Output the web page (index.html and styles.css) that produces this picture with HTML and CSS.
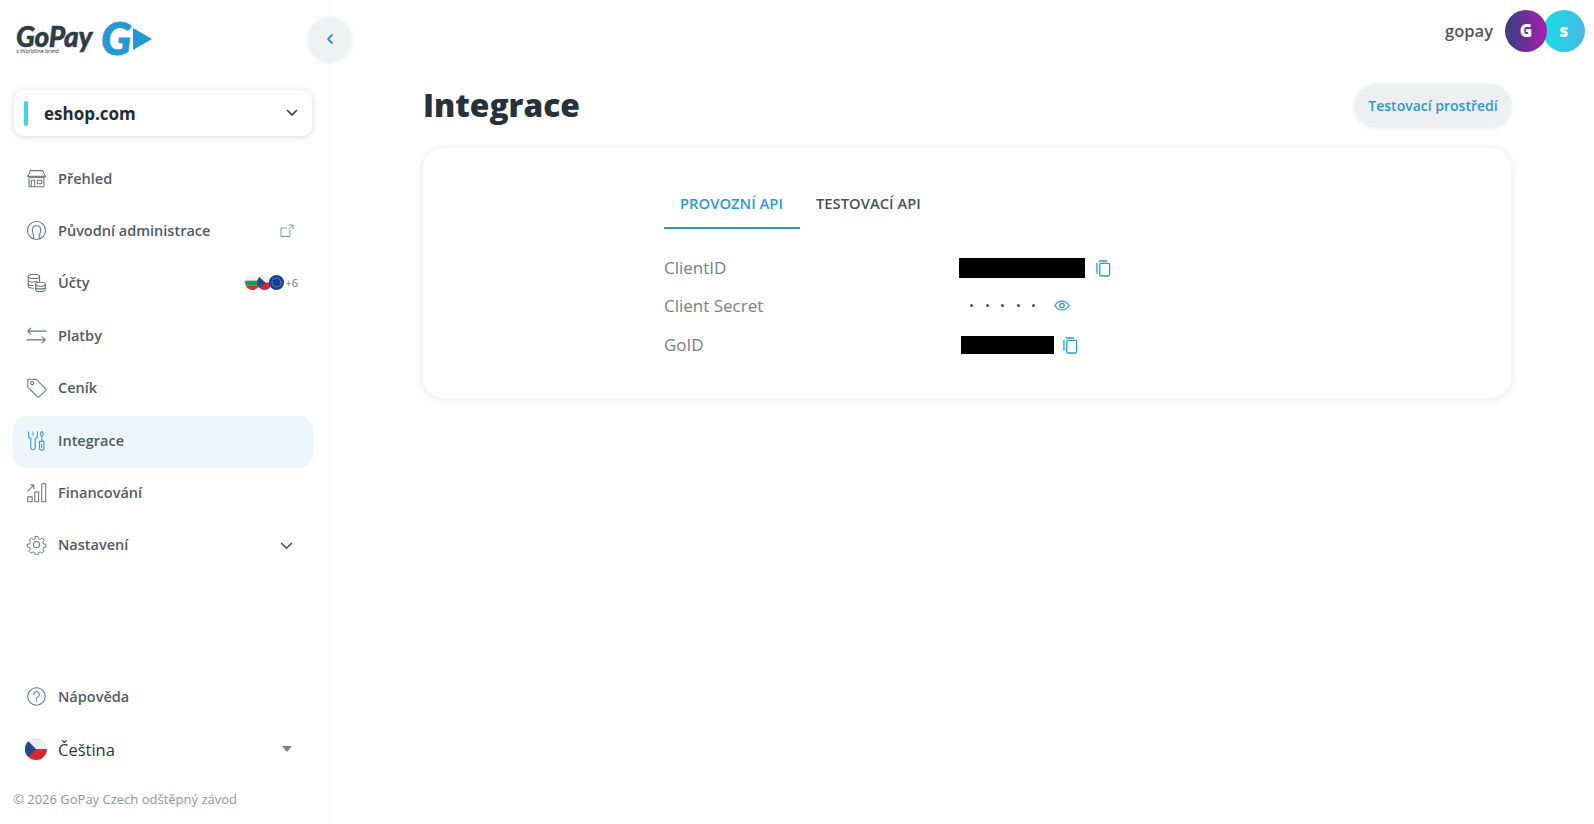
FILE: index.html
```html
<!DOCTYPE html>
<html lang="cs">
<head>
<meta charset="utf-8">
<title>Integrace</title>
<link rel="stylesheet" href="styles.css">
</head>
<body>
<div class="app">
  <aside class="sidebar">
    <div class="logo">
      <div class="logo-word"><span class="logo-name">GoPay</span><span class="logo-sub">a Worldline brand</span></div>
      <span class="logo-g">G</span>
      <svg class="logo-arrow" viewBox="0 0 19 22"><path d="M0 0 19 11 0 22z" fill="#1f9ad6"/></svg>
    </div>
    <button class="collapse" type="button" aria-label="Sbalit">
      <svg viewBox="0 0 12 12" width="12" height="12"><path d="M8 2 4 6l4 4" fill="none" stroke="#2a93c9" stroke-width="1.8" stroke-linecap="round" stroke-linejoin="round"/></svg>
    </button>
    <div class="shop">
      <span class="shop-bar"></span>
      <span class="shop-name">eshop.com</span>
      <svg class="shop-caret" viewBox="0 0 12 8" width="12" height="8"><path d="M1.500 1.500 6 6l4.500-4.500" fill="none" stroke="#333b42" stroke-width="1.600" stroke-linecap="round" stroke-linejoin="round"/></svg>
    </div>
    <nav class="nav">
      <a class="item">
        <svg class="ico" viewBox="0 0 24 24"><path d="M5 3h14l3 6.500a2 2 0 0 1-3.700.6 2 2 0 0 1-3.500 0 2 2 0 0 1-3.600 0 2 2 0 0 1-3.600 0 2 2 0 0 1-3.500 0A2 2 0 0 1 2 9.500zM2 9.500h20M3.500 12v9.500h17V12M6 21.500V14h4v7.500M13 14h5v4h-5z"/></svg>
        <span class="label">Přehled</span>
      </a>
      <a class="item">
        <svg class="ico" viewBox="0 0 24 24"><circle cx="12" cy="12" r="10.300"/><path d="M8.500 21.500c.5-2.500 1-3.500-.2-5.500-1-1.700-1.300-3.200-1.100-5C7.500 8.200 9.500 6.500 12 6.500s4.500 1.700 4.800 4.500c.2 1.800-.1 3.300-1.100 5-1.200 2-.7 3-.2 5.500"/></svg>
        <span class="label">Původní administrace</span>
        <svg class="ext" viewBox="0 0 14 14"><path d="M10 6v6.500H1V4h6M8.500 1H13v4M13 1 8.500 5.500"/></svg>
      </a>
      <a class="item">
        <svg class="ico" viewBox="0 0 24 24"><ellipse cx="9" cy="5" rx="6.500" ry="2.500"/><path d="M2.500 5v11c0 1.400 2.500 2.500 6 2.500M2.500 9c0 1.400 2.900 2.500 6.500 2.500 1.500 0 3-.2 4-.6M2.500 13c0 1.400 2.500 2.500 5.500 2.500M15.500 5v6"/><ellipse cx="16.500" cy="14" rx="5.500" ry="2.300"/><path d="M11 14v6c0 1.300 2.500 2.300 5.500 2.300s5.500-1 5.500-2.300v-6M11 17c0 1.300 2.500 2.300 5.500 2.300S22 18.300 22 17"/></svg>
        <span class="label">Účty</span>
        <span class="flags">
          <svg class="flag" viewBox="0 0 16 16"><clipPath id="fa"><circle cx="8" cy="8" r="8"/></clipPath><g clip-path="url(#fa)"><rect width="16" height="6" fill="#f1f1f1"/><rect y="6" width="16" height="5" fill="#1f9a5b"/><rect y="11" width="16" height="5" fill="#d3302f"/></g></svg>
          <svg class="flag" viewBox="0 0 16 16"><clipPath id="fb"><circle cx="8" cy="8" r="8"/></clipPath><g clip-path="url(#fb)"><rect width="16" height="8" fill="#f1f1f1"/><rect y="8" width="16" height="8" fill="#d7262d"/><path d="M0 0 9 8 0 16z" fill="#1f4a8c"/></g></svg>
          <svg class="flag" viewBox="0 0 16 16"><circle cx="8" cy="8" r="8" fill="#123f93"/><circle cx="8" cy="8" r="4.800" fill="none" stroke="#e8e4a0" stroke-width="1" stroke-dasharray="1 1.500"/></svg>
          <span class="more">+6</span>
        </span>
      </a>
      <a class="item">
        <svg class="ico" viewBox="0 0 24 24"><path d="M23 7H2M5.500 3.500 2 7l3.500 3.500M1 17h21M18.500 13.500 22 17l-3.500 3.500"/></svg>
        <span class="label">Platby</span>
      </a>
      <a class="item">
        <svg class="ico" viewBox="0 0 24 24"><path d="M3 2.500h8.500L22.500 13.500a1.500 1.500 0 0 1 0 2L15 22.500a1.500 1.500 0 0 1-2 0L2 11.500V3.500a1 1 0 0 1 1-1z"/><circle cx="7" cy="7" r="1.700"/></svg>
        <span class="label">Ceník</span>
      </a>
      <a class="item active">
        <svg class="ico ico-blue" viewBox="0 0 24 24"><path d="M3 2v4.500a3 3 0 0 0 2.500 3V20a2.500 2.500 0 0 0 5 0V9.500a3 3 0 0 0 2.500-3V2M8 2v4M17 2h2l.5 3-1 2h-1l-1-2zM18 7v6M15.500 13h5v7.500a2.500 2.500 0 0 1-5 0zM18 16v4"/></svg>
        <span class="label">Integrace</span>
      </a>
      <a class="item">
        <svg class="ico" viewBox="0 0 24 24"><path d="M2 10.500 9 3.500M5 3.500h4v4M2 17h5v5.500H2zM10 11.500h4.500v11H10zM18 2h4.500v20.500H18z"/></svg>
        <span class="label">Financování</span>
      </a>
      <a class="item">
        <svg class="ico" viewBox="0 0 24 24"><circle cx="12" cy="12" r="3.500"/><path d="M10.300 1.800h3.400l.6 3 2.200.9 2.600-1.700 2.400 2.400-1.700 2.600.9 2.200 3 .6v3.400l-3 .6-.9 2.200 1.700 2.600-2.400 2.400-2.600-1.700-2.200.9-.6 3h-3.400l-.6-3-2.200-.9-2.600 1.700-2.400-2.400 1.700-2.600-.9-2.200-3-.6v-3.400l3-.6.9-2.200L3.100 6.400l2.400-2.400 2.600 1.700 2.200-.9z" transform="translate(1.100 1.100) scale(.91)"/></svg>
        <span class="label">Nastavení</span>
        <svg class="nav-caret" viewBox="0 0 14 9"><path d="M1.500 1.500 7 7l5.500-5.500"/></svg>
      </a>
    </nav>
    <div class="side-foot">
      <a class="item">
        <svg class="ico" viewBox="0 0 24 24"><circle cx="12" cy="12" r="10"/><path d="M8.800 9.500a3.200 3.200 0 1 1 5 2.700c-1.200.8-1.800 1.500-1.800 2.800M12 17.200v.6"/></svg>
        <span class="label">Nápověda</span>
      </a>
      <div class="lang">
        <svg class="lang-flag" viewBox="0 0 22 22"><clipPath id="fc"><circle cx="11" cy="11" r="11"/></clipPath><g clip-path="url(#fc)"><rect width="22" height="11" fill="#ececec"/><rect y="11" width="22" height="11" fill="#d7262d"/><path d="M0 0 11 11 0 22z" fill="#1f4a8c"/></g></svg>
        <span class="lang-name">Čeština</span>
        <span class="lang-caret"></span>
      </div>
      <p class="copy">© 2026 GoPay Czech odštěpný závod</p>
    </div>
  </aside>
  <main class="main">
    <header class="top">
      <span class="user">gopay</span>
      <span class="avatars"><span class="av av-g">G</span><span class="av av-s">s</span></span>
    </header>
    <div class="content">
      <div class="head">
        <h1 class="title">Integrace</h1>
        <button class="env" type="button">Testovací prostředí</button>
      </div>
      <section class="card">
        <div class="panel">
          <div class="tabs">
            <span class="tab on">PROVOZNÍ API</span>
            <span class="tab">TESTOVACÍ API</span>
          </div>
          <dl class="rows">
            <div class="row">
              <dt>ClientID</dt>
              <dd><span class="mask mask-a"></span>
                <svg class="act" viewBox="0 0 16 18"><path d="M3.500 1h8M1 3.500V14"/><rect x="4" y="3.500" width="10.500" height="13.500" rx="1.500"/></svg></dd>
            </div>
            <div class="row">
              <dt>Client Secret</dt>
              <dd class="secret"><span class="dots"><i></i><i></i><i></i><i></i><i></i></span>
                <svg class="eye" viewBox="0 0 18 12"><path d="M1 6c2-3.300 4.800-5 8-5s6 1.700 8 5c-2 3.300-4.800 5-8 5S3 9.300 1 6z"/><circle cx="9" cy="6" r="2.500"/></svg></dd>
            </div>
            <div class="row">
              <dt>GoID</dt>
              <dd class="goid"><span class="mask mask-b"></span>
                <svg class="act" viewBox="0 0 16 18"><path d="M3.500 1h8M1 3.500V14"/><rect x="4" y="3.500" width="10.500" height="13.500" rx="1.500"/></svg></dd>
            </div>
          </dl>
        </div>
      </section>
    </div>
  </main>
</div>
</body>
</html>
```
FILE: styles.css
```css
* { box-sizing: border-box; }
html, body { margin: 0; height: 100%; }
body { font-family: "Open Sans", "Noto Sans", sans-serif; background: #fff; color: #46545c; overflow: hidden; }
.app { display: flex; height: 824px; }

.sidebar { position: relative; width: 330px; flex: none; display: flex; flex-direction: column; border-right: 1px solid #f4f5f6; padding: 0 16px 0 13px; }
.logo { height: 90px; display: flex; align-items: flex-start; padding: 22px 0 0 3px; }
.logo-word { display: flex; flex-direction: column; margin-top: 3px; width: 82px; }
.logo-name { font-family: Lato, sans-serif; font-size: 28px; line-height: 23px; font-weight: 900; font-style: italic; color: #2e3d47; letter-spacing: -.2px; -webkit-text-stroke: .5px #2e3d47; }
.logo-sub { font-family: Lato, sans-serif; font-size: 5.500px; line-height: 7px; color: #3c4850; white-space: nowrap; }
.logo-g { font-family: Lato, sans-serif; font-size: 45px; line-height: 33px; font-weight: 900; font-style: italic; color: #1f9ad6; margin-left: 3px; -webkit-text-stroke: .8px #1f9ad6; }
.logo-arrow { width: 19px; height: 22px; margin: 6px 0 0 2px; }
.collapse { position: absolute; left: 309px; top: 18px; width: 42px; height: 42px; padding: 0; border: 0; border-radius: 50%; background: #eff0f1; box-shadow: 0 1px 6px rgba(0,0,0,.12); display: flex; align-items: center; justify-content: center; }

.shop { height: 46px; margin: 0 1px; padding: 0 14px 0 10px; display: flex; align-items: center; border-radius: 10px; background: #fff; box-shadow: 0 1px 7px rgba(0,0,0,.16); }
.shop-bar { width: 4px; height: 25px; border-radius: 2px; background: #3fd3e4; }
.shop-name { margin-left: 16px; flex: 1; font-size: 17px; font-weight: 700; color: #232c33; }

.nav { margin-top: 16px; display: flex; flex-direction: column; }
.item { height: 52.400px; display: flex; align-items: center; padding: 0 17px 0 13px; border-radius: 14px; }
.item.active { background: #edf6fb; margin: 2px 0 -2px; padding-bottom: 4px; }
.ico { width: 21px; height: 21px; flex: none; fill: none; stroke: #67747c; stroke-width: 1.200; stroke-linecap: round; stroke-linejoin: round; }
.ico-blue { stroke: #2a9bd0; }
.label { margin-left: 11px; flex: 1; font-size: 14.500px; font-weight: 600; color: #4f5c64; white-space: nowrap; }
.ext { width: 14px; height: 14px; margin-right: 2px; fill: none; stroke: #8d979d; stroke-width: 1; }
.flags { display: flex; align-items: center; margin-right: -2px; }
.flag { width: 15px; height: 15px; margin-right: -3px; }
.more { margin-left: 4px; font-size: 11px; color: #67747c; }
.nav-caret { width: 13px; height: 8px; margin: 3px 3px 0 0; fill: none; stroke: #4c5961; stroke-width: 1.800; stroke-linecap: round; stroke-linejoin: round; }

.side-foot { margin-top: auto; display: flex; flex-direction: column; margin-bottom: 10px; }
.lang { height: 53.500px; display: flex; align-items: center; padding: 0 21px 0 12px; }
.lang-flag { width: 22px; height: 22px; flex: none; }
.lang-name { margin-left: 11px; flex: 1; font-size: 16.500px; color: #2e3a42; }
.lang-caret { width: 0; height: 0; border: 5.500px solid transparent; border-top: 6px solid #7d878d; border-bottom: 0; }
.copy { margin: 15px 0 7px; font-size: 13px; line-height: 16px; color: #8d979d; white-space: nowrap; }

.main { flex: 1; min-width: 0; display: flex; flex-direction: column; padding: 0 83px 0 93px; }
.top { height: 61px; margin-right: -83px; display: flex; align-items: center; justify-content: flex-end; padding-right: 9px; }
.user { font-size: 16.500px; font-weight: 600; color: #4c5961; margin-right: 11px; }
.avatars { display: flex; margin-left: 1px; }
.av { width: 42px; height: 42px; border-radius: 50%; display: flex; align-items: center; justify-content: center; color: #fff; font-size: 17px; font-weight: 800; }
.av-g { position: relative; z-index: 1; background: linear-gradient(90deg, #37407f, #a71fb0); }
.av-s { margin-left: -4px; background: linear-gradient(90deg, #15dfe6, #4ab6e4); }

.head { height: 87px; display: flex; align-items: flex-start; justify-content: space-between; padding-top: 23px; }
.title { margin: 0; font-size: 31.700px; line-height: 42px; font-weight: 800; color: #25323a; }
.env { height: 43px; width: 156px; padding: 0; border: 0; border-radius: 22px; background: #eeeff0; box-shadow: 0 1px 5px rgba(0,0,0,.1); font: 600 14px "Open Sans", sans-serif; color: #2a9bd0; }

.card { height: 250px; border-radius: 20px; background: #fff; box-shadow: 0 1px 8px rgba(0,0,0,.1); padding: 28px 0 0 241px; }
.panel { width: 460px; }
.tabs { display: flex; }
.tab { height: 53px; padding: 17px 17px 0 16px; font-size: 14.800px; line-height: 20px; font-weight: 600; color: #46545c; border-bottom: 2px solid transparent; }
.tab.on { color: #2a9bd0; border-bottom-color: #2a9bd0; }
.rows { margin: 20px 0 0; display: flex; flex-direction: column; }
.row { height: 38.500px; display: flex; align-items: center; }
.row dt { width: 295px; padding-bottom: 2px; font-size: 17px; color: #76838b; flex: none; }
.row dd { margin: 0; display: flex; align-items: center; }
.mask { display: block; background: #000; }
.mask-a { width: 126px; height: 20px; }
.mask-b { width: 93px; height: 18px; margin-left: 2px; }
.act { width: 15px; height: 17px; margin-left: 11px; fill: none; stroke: #2a9bd0; stroke-width: 1.400; stroke-linecap: round; stroke-linejoin: round; }
.goid .act { margin-left: 9px; }
.dots { display: flex; gap: 12.500px; margin-left: 11px; }
.dots i { width: 3px; height: 3px; border-radius: 50%; background: #46545c; }
.secret { padding-bottom: 2px; }
.eye { width: 16px; height: 11px; margin-left: 19px; fill: none; stroke: #2a9bd0; stroke-width: 1.400; }
```
